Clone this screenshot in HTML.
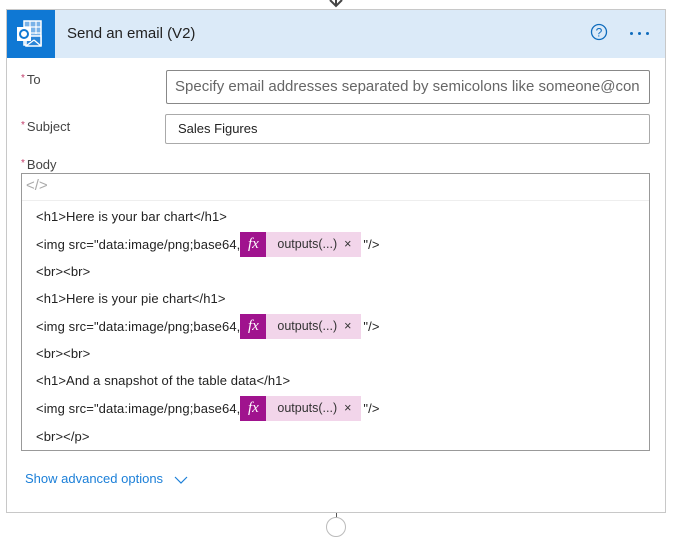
<!DOCTYPE html>
<html><head><style>
*{box-sizing:border-box;margin:0;padding:0}
body{width:675px;height:523px;background:#fff;font-family:"Segoe UI","Liberation Sans",sans-serif;position:relative;overflow:hidden;color:#333}
.card{position:absolute;left:6px;top:9px;width:660px;height:504px;border:1px solid #c8c8c8;background:#fff}
.hdr{position:absolute;left:0;top:0;width:658px;height:48px;background:#dbeaf8}
.ico{position:absolute;left:0;top:0;width:48px;height:48px;background:#0f78d4}
.title{position:absolute;left:60px;top:15px;font-size:15px;color:#222}
.lbl{position:absolute;font-size:13px;color:#444}
.lbl b{color:#c23d6b;font-weight:normal;font-size:10px;vertical-align:3px;margin-right:2px}
.inp{position:absolute;border:1px solid #888;border-radius:2px;background:#fff;font-size:14px;color:#555;padding-left:8px;white-space:nowrap;overflow:hidden}
.body{position:absolute;left:21px;top:173px;width:629px;height:278px;border:1px solid #999}
.ln{position:absolute;left:14px;font-size:13px;letter-spacing:0.1px;color:#222;white-space:nowrap;line-height:25px;height:25px}
.tok{display:inline-block;vertical-align:top;height:25px;background:#f2d5ea;width:121px;position:relative;margin:0 2px 0 0;letter-spacing:0}
.tok i{position:absolute;left:0;top:0;width:26px;height:25px;background:#a0138e;color:#fff;font-family:"Liberation Serif",serif;font-size:15px;text-align:center;line-height:24px}
.tok span{position:absolute;left:37px;top:0;font-size:12.5px;color:#333}
</style></head><body>
<svg style="position:absolute;left:328px;top:-2px" width="16" height="10"><path d="M2 2 L8 8 L14 2 M8 0 V8" stroke="#444" stroke-width="2" fill="none"/></svg>
<div class="card">
 <div class="hdr">
  <div class="ico"><svg width="48" height="48"><rect x="17" y="11" width="17" height="24" fill="#7ab3e8" stroke="#fff" stroke-width="1.5"/><path d="M17 17 H34 M17 23 H34 M23 11 V24 M29 11 V24" stroke="#fff" stroke-width="1.2"/><path d="M19 26 L34 26 L34 36 L19 36 Z" fill="#2a85d8" stroke="#fff" stroke-width="1.5"/><path d="M19 36 L27 30 M34 36 L27 30" stroke="#fff" stroke-width="1.3"/><rect x="10" y="17" width="14" height="14" fill="#fff"/><circle cx="17" cy="24" r="4" fill="none" stroke="#0f78d4" stroke-width="2"/></svg></div>
  <div class="title">Send an email (V2)</div>
  <svg style="position:absolute;left:583px;top:13px" width="20" height="20"><circle cx="9" cy="9" r="7.5" fill="none" stroke="#0f6cbd" stroke-width="1.3"/><text x="9" y="13.5" text-anchor="middle" font-size="12" fill="#0f6cbd" font-family="Liberation Sans">?</text></svg>
  <div style="position:absolute;left:623px;top:22px;font-size:0"><span style="display:inline-block;width:3px;height:3px;background:#0f6cbd;border-radius:50%;margin-right:5px"></span><span style="display:inline-block;width:3px;height:3px;background:#0f6cbd;border-radius:50%;margin-right:5px"></span><span style="display:inline-block;width:3px;height:3px;background:#0f6cbd;border-radius:50%"></span></div>
 </div>
</div>
<div class="lbl" style="left:21px;top:72px"><b>*</b>To</div>
<div class="inp" style="left:166px;top:70px;width:484px;height:34px;line-height:32px;color:#666;font-size:15px">Specify email addresses separated by semicolons like someone@con</div>
<div class="lbl" style="left:21px;top:119px"><b>*</b>Subject</div>
<div class="inp" style="left:165px;top:114px;width:485px;height:30px;line-height:28px;font-size:13px;color:#222;border-color:#aaa;padding-left:12px">Sales Figures</div>
<div class="lbl" style="left:21px;top:157px"><b>*</b>Body</div>
<div class="body">
 <div style="position:absolute;left:0;top:0;width:627px;height:27px;border-bottom:1px solid #eee"></div>
 <div style="position:absolute;left:4px;top:3px;font-size:15px;color:#aaa">&lt;/&gt;</div>
 <div class="ln" style="top:30px">&lt;h1&gt;Here is your bar chart&lt;/h1&gt;</div>
 <div class="ln" style="top:58px">&lt;img src="data:image/png;base64,<span class="tok"><i><em>fx</em></i><span>outputs(...) &nbsp;×</span></span>"/&gt;</div>
 <div class="ln" style="top:85px">&lt;br&gt;&lt;br&gt;</div>
 <div class="ln" style="top:112px">&lt;h1&gt;Here is your pie chart&lt;/h1&gt;</div>
 <div class="ln" style="top:140px">&lt;img src="data:image/png;base64,<span class="tok"><i><em>fx</em></i><span>outputs(...) &nbsp;×</span></span>"/&gt;</div>
 <div class="ln" style="top:167px">&lt;br&gt;&lt;br&gt;</div>
 <div class="ln" style="top:194px">&lt;h1&gt;And a snapshot of the table data&lt;/h1&gt;</div>
 <div class="ln" style="top:222px">&lt;img src="data:image/png;base64,<span class="tok"><i><em>fx</em></i><span>outputs(...) &nbsp;×</span></span>"/&gt;</div>
 <div class="ln" style="top:250px">&lt;br&gt;&lt;/p&gt;</div>
</div>
<div style="position:absolute;left:25px;top:471px;font-size:13px;color:#1b7fd8">Show advanced options</div>
<svg style="position:absolute;left:174px;top:475px" width="14" height="10"><path d="M1 2 L7 8 L13 2" stroke="#1b7fd8" stroke-width="1.2" fill="none"/></svg>
<div style="position:absolute;left:336px;top:513px;width:1px;height:5px;background:#555"></div>
<div style="position:absolute;left:326px;top:517px;width:20px;height:20px;border:1px solid #bbb;border-radius:50%"></div>
</body></html>
